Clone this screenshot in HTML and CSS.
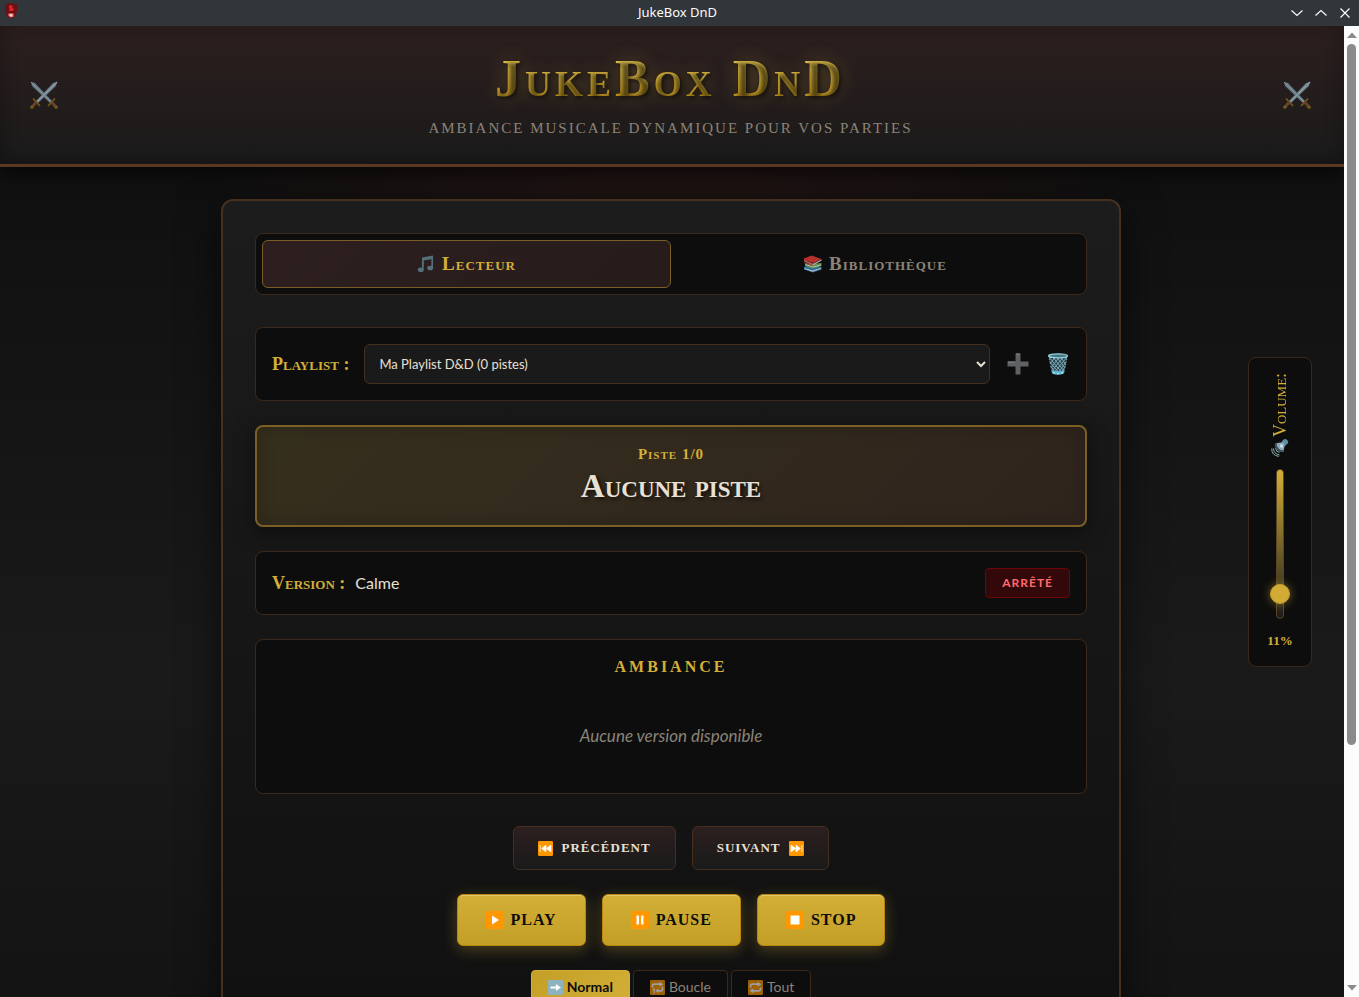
FILE: index.html
```html
<!DOCTYPE html>
<html lang="fr">
<head>
<meta charset="utf-8">
<title>JukeBox DnD</title>
<link rel="stylesheet" href="styles.css">
</head>
<body>
<svg class="defs" width="0" height="0" aria-hidden="true">
  <symbol id="swords" viewBox="0 0 28 28">
    <path d="M1 1l4 1 17 18-2 2L2 5z" fill="#78909c"/><path d="M1 1l20 20" stroke="#a3b8c0" stroke-width="1"/>
    <path d="M27 1l-4 1L6 20l2 2L26 5z" fill="#78909c"/><path d="M27 1L7 21" stroke="#a9bfc8" stroke-width="1.2"/>
    <path d="M3 17.500l7 7.500M25 17.500L18 25" stroke="#8a6a14" stroke-width="1.800"/>
    <path d="M6.500 21L2 26M21.500 21l4.500 5" stroke="#7a4a35" stroke-width="3"/>
    <circle cx="1.800" cy="26.200" r="1.600" fill="#8a6a14"/><circle cx="26.200" cy="26.200" r="1.600" fill="#8a6a14"/>
  </symbol>
</svg>

<header class="titlebar">
  <svg class="app-icon" viewBox="0 0 14 16" aria-hidden="true"><path d="M1 1.500L7 0l6 1.500v7Q12 13.500 7 16 2 13.500 1 8.500z" fill="#6d1015"/><path d="M5 2.500q3-1 4 1l-1 1.500 2.500 1L8.500 8H4.500l1.500-2-1-1z" fill="#d8242b"/><path d="M4.500 10.500h5v3L7 14.500 4.500 13z" fill="#f08a80"/><circle cx="7" cy="12" r="1" fill="#ffe1dc"/></svg>
  <span class="titlebar-text">JukeBox DnD</span>
  <div class="window-buttons">
    <button aria-label="Réduire"><svg viewBox="0 0 12 12"><path d="M.500 3.500L6 8.500l5.500-5"/></svg></button>
    <button aria-label="Agrandir"><svg viewBox="0 0 12 12"><path d="M.500 8.500L6 3.500l5.500 5"/></svg></button>
    <button aria-label="Fermer"><svg viewBox="0 0 12 12"><path d="M1.500 1.500l9 9M10.500 1.500l-9 9"/></svg></button>
  </div>
</header>

<div class="window">
  <div class="page">
    <header class="banner">
      <svg class="swords"><use href="#swords"/></svg>
      <div class="banner-text">
        <h1>JukeBox DnD</h1>
        <p>Ambiance musicale dynamique pour vos parties</p>
      </div>
      <svg class="swords"><use href="#swords"/></svg>
    </header>

    <main class="card">
      <nav class="tabs">
        <button class="tab tab-active"><svg class="i18" viewBox="0 0 18 18"><path d="M5 2.500L16 .500v3.500L6.500 5.500V14" fill="#546e7a"/><path d="M5.800 3v11M15.200 1.500V12" stroke="#546e7a" stroke-width="1.700"/><ellipse cx="3.800" cy="14.700" rx="3" ry="2.300" fill="#546e7a"/><ellipse cx="13.200" cy="13" rx="3" ry="2.300" fill="#546e7a"/></svg><span>Lecteur</span></button>
        <button class="tab"><svg class="i18 books" viewBox="0 0 18 18"><path d="M0 12l5-2 12.500 2v2.500L9 17.500 0 14.500z" fill="#256f9e"/><path d="M.500 13.500l8 2.500 8.500-2.500" stroke="#b8b8b8" stroke-width="1.200" fill="none"/><path d="M1 8l6 1 10.500-1v3L9 13.500 1 11z" fill="#5f8f4e"/><path d="M1.500 9.500l7.500 2.500 8-2" stroke="#b8b8b8" stroke-width="1" fill="none"/><path d="M0 3.500L7.500.500l10 3.500L9.500 8 0 5z" fill="#b7302a"/><path d="M0 5.500l9 4 8.500-4.500" stroke="#b8b0aa" stroke-width="1.200" fill="none"/><path d="M0 3.500v5l9 3V8z" fill="#a12723" opacity=".5"/></svg><span>Bibliothèque</span></button>
      </nav>

      <section class="box playlist">
        <label class="gold-label" for="playlist">Playlist :</label>
        <select id="playlist"><option>Ma Playlist D&amp;D (0 pistes)</option></select>
        <div class="playlist-actions">
          <button class="icon-button" aria-label="Ajouter"><svg viewBox="0 0 22 22"><path d="M8.500.500h5v8h8v5h-8v8h-5v-8h-8v-5h8z" fill="#5f6165"/><path d="M9 1h4M1 9h7" stroke="#85888c"/></svg></button>
          <button class="icon-button" aria-label="Supprimer"><svg viewBox="0 0 22 22"><path d="M1.500 2.500h19L17.500 20q-6.500 3-13 0z" fill="#2b434d"/><g stroke="#79a7b5" stroke-width="1" fill="none"><path d="M2 4l13 16M5 3l12 15M9 3l9 12M13 3l6 9M17 3l3 4M2.500 8.500L12 20M3.500 13L9 20"/><path d="M20 4L7 20M17 3L5 18M13 3L4 15M9 3L3 11M5 3L2 7M19.500 8.500L11 20M18.500 13L14 20"/></g><ellipse cx="11" cy="2.800" rx="9.500" ry="2" fill="#4c7480" stroke="#8fd3e2" stroke-width="1.300"/><path d="M4.500 17q6.500 2.500 13 0l-.700 3.500q-5.800 2.500-11.600 0z" fill="#62b7cf"/><path d="M7 19v2M11 19.500v2M15 19v2" stroke="#b5ecf5"/></svg></button>
        </div>
      </section>

      <section class="now">
        <p class="now-index">Piste 1/0</p>
        <h2>Aucune piste</h2>
      </section>

      <section class="box version">
        <div class="version-text"><span class="gold-label">Version :</span><span>Calme</span></div>
        <span class="badge">ARRÊTÉ</span>
      </section>

      <section class="box ambiance">
        <h3>AMBIANCE</h3>
        <p>Aucune version disponible</p>
      </section>

      <section class="controls">
        <div class="row">
          <button class="btn dark"><svg class="i15" viewBox="0 0 18 18"><rect width="18" height="18" rx="1.500" fill="#ff9800"/><path d="M2.500 5v8M9.500 5v8L4.500 9zM15.500 5v8L10 9z" fill="#fff" stroke="#fff"/></svg>PRÉCÉDENT</button>
          <button class="btn dark">SUIVANT<svg class="i15" viewBox="0 0 18 18"><rect width="18" height="18" rx="1.500" fill="#ff9800"/><path d="M15.500 5v8M8.500 5v8l5-4zM2.500 5v8L8 9z" fill="#fff" stroke="#fff"/></svg></button>
        </div>
        <div class="row">
          <button class="btn gold"><svg class="i18" viewBox="0 0 18 18"><rect width="18" height="18" rx="1.500" fill="#ff9800"/><path d="M6 4.500v9L13 9z" fill="#fff"/></svg>PLAY</button>
          <button class="btn gold"><svg class="i18" viewBox="0 0 18 18"><rect width="18" height="18" rx="1.500" fill="#ff9800"/><path d="M5.500 4.500H8v9H5.500zM10 4.500h2.500v9H10z" fill="#fff"/></svg>PAUSE</button>
          <button class="btn gold"><svg class="i18" viewBox="0 0 18 18"><rect width="18" height="18" rx="1.500" fill="#ff9800"/><path d="M4.500 4.500h9v9h-9z" fill="#fff"/></svg>STOP</button>
        </div>
        <div class="modes">
          <button class="mode mode-active"><svg class="i15" viewBox="0 0 18 18"><rect width="18" height="18" rx="1.500" fill="#8db2c0"/><path d="M3 7.800h6.500v-3L15.500 9l-6 4.200v-3H3z" fill="#fff"/></svg>Normal</button>
          <button class="mode"><svg class="i15" viewBox="0 0 18 18"><rect width="18" height="18" rx="1.500" fill="#ff9800"/><path d="M3 9V6.500Q3 5 5 5h7M15 8v3q0 2-2 2H9" fill="none" stroke="#fff" stroke-width="2"/><path d="M11.500 2l4.500 3-4.500 3zM10 10v6l-3.500-3z" fill="#fff"/><path d="M3.500 11.500L5 11v5" stroke="#fff" stroke-width="1.500" fill="none"/></svg>Boucle</button>
          <button class="mode"><svg class="i15" viewBox="0 0 18 18"><rect width="18" height="18" rx="1.500" fill="#ff9800"/><path d="M3 9V6.500Q3 5 5 5h7M15 9v2.500q0 1.500-2 1.500H6" fill="none" stroke="#fff" stroke-width="2"/><path d="M11.500 2l4.500 3-4.500 3zM6.500 10v6L2 13z" fill="#fff"/></svg>Tout</button>
        </div>
      </section>
    </main>
  </div>

  <aside class="volume">
    <label for="volume"><span>Volume:</span><svg viewBox="0 0 18 18"><path d="M10 4l2-3q3-2 5 1 1 2-2 4l-2 2z" fill="#5d8fa3"/><path d="M5 4.500q5-1.500 8-.500 1 4-.500 8.500Q6 12 5 4.500z" fill="#8ba9b8"/><path d="M5 4.500Q4 8 7 10.500T13 12" fill="none" stroke="#3f5662" stroke-width="2"/><path d="M9.500 5l2.500 1-.500 3-2.500-1z" fill="#c9e1ea"/><g fill="none" stroke="#8ea9a8" stroke-width="1"><path d="M4.500 9.500q.500 3.500 4 4"/><path d="M2.500 9.500q0 5.500 6 6.500"/><path d="M.800 9.500q-.500 7 7 8"/></g></svg></label>
    <input id="volume" type="range" min="0" max="100" value="11">
    <output for="volume">11%</output>
  </aside>

  <div class="scrollbar" aria-hidden="true">
    <svg viewBox="0 0 10 6"><path d="M0 6l5-5.500L10 6z"/></svg>
    <div class="scroll-track"><div class="scroll-thumb"></div></div>
    <svg viewBox="0 0 10 6"><path d="M0 0l5 5.500L10 0z"/></svg>
  </div>
</div>
</body>
</html>
```
FILE: styles.css
```css
* { box-sizing: border-box; margin: 0; }
body {
  height: 100vh;
  display: flex;
  flex-direction: column;
  overflow: hidden;
  background: #0d0d0d;
  color: #e8e0d5;
  font: 16px/24px Lato, "Open Sans", sans-serif;
}
button { font: inherit; color: inherit; background: none; border: 0; padding: 0; }
svg { flex: none; }
.defs { position: absolute; }

/* Window frame */
.titlebar {
  display: grid;
  grid-template-columns: 1fr auto 1fr;
  align-items: center;
  flex: none;
  height: 26px;
  padding: 0 8px 0 4px;
  background: #31363b;
  color: #fcfcfc;
  font: 13px/24px "Noto Sans", sans-serif;
}
.titlebar-text { padding-bottom: 2px; }
.app-icon { width: 14px; height: 16px; margin-bottom: 4px; }
.window-buttons { display: flex; justify-content: flex-end; gap: 12px; }
.window-buttons button { display: flex; }
.window-buttons svg { width: 12px; height: 12px; fill: none; stroke: #fcfcfc; stroke-width: 1.2; }

.window { position: relative; flex: 1; min-height: 0; display: flex; }
.page {
  flex: 1;
  min-width: 0;
  overflow: hidden;
  padding-right: 2px;
  background:
    radial-gradient(ellipse 500px 320px at 50% 60px, rgba(80, 30, 30, .35), transparent) no-repeat,
    linear-gradient(#0d0d0d, #1a1a1a 50%, #0d0d0d) 0 0 / 100% 1300px;
}
.scrollbar {
  flex: none;
  width: 15px;
  display: flex;
  flex-direction: column;
  align-items: center;
  gap: 6px;
  padding: 6px 0;
  background: #fcfcfc;
}
.scrollbar svg { width: 10px; height: 6px; fill: #8b8b8b; }
.scroll-track { flex: 1; width: 9px; }
.scroll-thumb { height: 75%; border-radius: 5px; background: #8b8b8b; }

/* Banner */
.banner {
  display: flex;
  align-items: center;
  justify-content: space-between;
  margin-right: -2px;
  padding: 24px 33px 24px 30px;
  border-bottom: 3px solid #5a3821;
  background: linear-gradient(#2d1f1f, #1a1a1a);
  box-shadow: 0 4px 20px rgba(0, 0, 0, .7), inset 0 0 20px rgba(0, 0, 0, .3);
}
.banner-text { text-align: center; }
.swords { width: 28px; height: 28px; opacity: .8; }
.banner h1 {
  font: small-caps bold 52px/58px "Liberation Serif", serif;
  letter-spacing: 4px;
  background: linear-gradient(#f4d560, #d4af37 50%, #b8860b);
  background-clip: text;
  color: transparent;
  text-shadow: 2px 2px 4px rgba(0, 0, 0, .6), 0 0 20px rgba(212, 175, 55, .3);
}
.banner p {
  margin-top: 10px;
  padding-bottom: 2px;
  font: 15px/20px "Liberation Serif", serif;
  letter-spacing: 2px;
  text-transform: uppercase;
  color: #8b8378;
}

/* Card */
.card {
  max-width: 900px;
  margin: 32px auto;
  padding: 32px;
  border: 2px solid #45301f;
  border-radius: 12px;
  background: linear-gradient(#1c1c1c, #0d0d0d) 0 0 / 100% 1075px;
  box-shadow: 0 10px 40px rgba(0, 0, 0, .6);
}
.box, .tabs { border: 1px solid #3c291b; border-radius: 8px; background: #0d0d0d; }
.box { padding: 16px; margin-bottom: 24px; }
.tabs { display: grid; grid-template-columns: 1fr 1fr; padding: 6px; margin-bottom: 32px; }
.tab {
  display: flex;
  align-items: center;
  justify-content: center;
  gap: 7px;
  height: 48px;
  border-radius: 6px;
  color: #8b8378;
  font: small-caps bold 19px/24px "Liberation Serif", serif;
  letter-spacing: 1px;
}
.tab-active {
  border: 1px solid #7a5f25;
  background: linear-gradient(135deg, #2d1f1f, #281b1b);
  color: #d4af37;
}
.i18 { width: 18px; height: 18px; }
.i15 { width: 15px; height: 15px; }

.gold-label { color: #d4af37; font: small-caps bold 18px/24px "Liberation Serif", serif; }
.playlist { display: flex; align-items: center; gap: 15px; }
.playlist select {
  flex: 1;
  min-width: 0;
  height: 40px;
  padding: 0 0 0 10px;
  border: 1px solid #45301f;
  border-radius: 6px;
  background: #1a1a1a;
  color: #e8e0d5;
  font: 13px/20px Lato, sans-serif;
}
.playlist-actions { display: flex; gap: 18px; padding: 0 1px 0 2px; }
.icon-button { display: flex; }
.icon-button svg { width: 22px; height: 22px; }

.now {
  margin-bottom: 24px;
  padding: 17px 16px;
  border: 2px solid #7a6024;
  border-radius: 8px;
  background: linear-gradient(135deg, #352f1d, #30241d);
  box-shadow: 0 4px 20px rgba(0, 0, 0, .5), inset 0 0 20px rgba(0, 0, 0, .2);
  text-align: center;
}
.now-index { color: #d4af37; font: small-caps bold 15px/20px "Liberation Serif", serif; letter-spacing: 1px; }
.now h2 {
  margin: 2px 0;
  font: small-caps bold 33px/40px "Liberation Serif", serif;
  text-shadow: 2px 2px 4px rgba(0, 0, 0, .8);
}

.version { display: flex; align-items: center; justify-content: space-between; }
.version-text { display: flex; gap: 10px; align-items: baseline; }
.badge {
  padding: 5px 16px;
  border: 1px solid #6b0508;
  border-radius: 4px;
  background: #33080b;
  color: #ff6b6b;
  font: bold 12px/18px Lato, sans-serif;
  letter-spacing: 1px;
}

.ambiance { text-align: center; padding: 15px 16px 45px; margin-bottom: 32px; }
.ambiance h3 { color: #d4af37; font: bold 16px/24px "Liberation Serif", serif; letter-spacing: 3px; }
.ambiance p { margin-top: 45px; color: #8b8378; font-style: italic; font-size: 17px; }

.controls { display: flex; flex-direction: column; gap: 24px; }
.row { display: flex; justify-content: center; gap: 16px; }
.btn {
  display: flex;
  align-items: center;
  border-radius: 6px;
  font-family: "Liberation Serif", serif;
  font-weight: bold;
  letter-spacing: 1px;
}
.dark {
  height: 44px;
  gap: 8px;
  padding: 0 24px;
  border: 1px solid #45301f;
  background: linear-gradient(#2d1f1f, #1a1a1a);
  font-size: 13px;
}
.gold {
  height: 52px;
  gap: 7px;
  padding: 0 28px;
  border: 1px solid #b8860b;
  background: linear-gradient(#d4af37, #c49f27);
  box-shadow: 0 4px 15px rgba(212, 175, 55, .3), inset 0 1px 0 rgba(255, 255, 255, .3);
  color: #0d0d0d;
  font-size: 16px;
}
.modes { display: flex; justify-content: center; gap: 3px; }
.mode {
  display: flex;
  align-items: center;
  gap: 4px;
  height: 34px;
  padding: 0 16px;
  border: 1px solid #3c291b;
  border-radius: 4px;
  background: #0d0d0d;
  color: #8b8378;
  font-size: 14px;
}
.mode svg { opacity: .6; }
.mode-active { border-color: #d4af37; background: linear-gradient(135deg, #c49f27, #d4af37); color: #0d0d0d; font-weight: bold; }
.mode-active svg { opacity: 1; }

/* Volume panel, floating over the page */
.volume {
  position: absolute;
  top: 50%;
  right: 47px;
  transform: translateY(-50%);
  display: flex;
  flex-direction: column;
  align-items: center;
  width: 64px;
  padding: 15px 0 13px;
  border: 1px solid #3c291b;
  border-radius: 8px;
  background: #0d0d0d;
  color: #d4af37;
  font-family: "Liberation Serif", serif;
}
.volume label { display: flex; flex-direction: column; align-items: center; gap: 2px; }
.volume span {
  writing-mode: vertical-rl;
  rotate: 180deg;
  font: small-caps 18px/20px "Liberation Serif", serif;
}
.volume svg { width: 18px; height: 18px; }
.volume input {
  appearance: none;
  writing-mode: vertical-lr;
  direction: rtl;
  width: 8px;
  height: 150px;
  margin: 12px 0 10px;
  border-radius: 4px;
  border: 1px solid #5a4523;
  background: linear-gradient(#d4af37, #1a1a1a);
}
.volume input::-webkit-slider-thumb {
  appearance: none;
  width: 20px;
  height: 20px;
  border: 1px solid #c49f27;
  border-radius: 50%;
  background: #d0ab35;
  box-shadow: 0 0 10px rgba(212, 175, 55, .5);
}
.volume output { font-weight: bold; font-size: 13px; line-height: 24px; }
```
